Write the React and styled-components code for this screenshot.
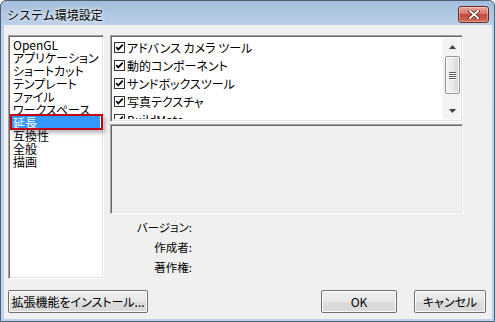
import React from 'react';
import styled, { createGlobalStyle } from 'styled-components';

const Global = createGlobalStyle`
  html, body { margin: 0; padding: 0; background: #ffffff; }
  body {
    width: 495px; height: 322px; overflow: hidden;
    font-family: "Noto Sans CJK JP", "Noto Sans", sans-serif;
    font-feature-settings: "palt";
    -webkit-font-smoothing: antialiased;
  }
`;

const Win = styled.div`
  width: 495px; height: 322px; box-sizing: border-box;
  display: flex; flex-direction: column;
  border: 1px solid #4d6078;
  border-radius: 6px 6px 0 0;
  background: linear-gradient(#a3bddb, #c0d4eb 30px, #bcd2ea);
  padding: 0 2px 2px 3px;
`;

const TitleBar = styled.div`
  height: 24px; flex: none;
  display: flex; align-items: center; justify-content: space-between;
  padding: 0 3px 0 3px;
`;

const Title = styled.div`
  font-size: 12px; color: #000;
  font-feature-settings: normal;
  text-shadow: 0 0 6px rgba(255,255,255,0.9), 0 0 3px rgba(255,255,255,0.9);
  margin-top: 3px;
`;

const CloseBtn = styled.div`
  width: 31px; height: 17px; box-sizing: border-box;
  margin-top: 3px;
  border: 1px solid #6b2a27; border-radius: 3px;
  background: linear-gradient(#e9a89b, #d5766a 45%, #c24a3d 50%, #cf6c57);
  box-shadow: inset 0 0 0 1px rgba(255,255,255,0.35);
  display: flex; align-items: center; justify-content: center;
`;

const Client = styled.div`
  flex: 1; background: #f0f0f0;
  display: flex; flex-direction: column;
  padding: 10px 6px 6px 4px;
  font-size: 12px; color: #000;
`;

const Main = styled.div`
  display: flex; gap: 6px; align-items: flex-start;
`;

const sunken = `
  box-sizing: border-box;
  border: 1px solid; border-color: #a0a0a0 #ffffff #ffffff #a0a0a0;
  box-shadow: inset 1px 1px 0 #696969, inset -1px -1px 0 #e3e3e3;
`;

const ListBox = styled.div`
  ${sunken}
  width: 96px; height: 244px;
  background: #fff;
  padding: 2px 3px 2px 2px;
`;

const ListItem = styled.div`
  position: relative;
  height: 13px; line-height: 13px;
  padding-left: 2px;
  white-space: nowrap;
  background: ${p => (p.$sel ? '#3399ff' : 'transparent')};
  color: ${p => (p.$sel ? '#fff' : '#000')};
  ${p => p.$sel && `
    &::after {
      content: ""; position: absolute;
      left: -1px; right: -3px; top: -2px; bottom: -1px;
      border: 2px solid #c3001c;
      box-shadow: 2px 3px 4px rgba(0,0,0,0.28);
    }
  `}
`;

const RightCol = styled.div`
  width: 353px; display: flex; flex-direction: column;
`;

const CheckList = styled.div`
  ${sunken}
  height: 87px; background: #fff;
  display: flex; overflow: hidden;
  padding: 2px;
`;

const CheckItems = styled.div`
  flex: 1; overflow: hidden;
  padding-left: 1px;
`;

const CheckRow = styled.div`
  height: 18px; display: flex; align-items: center; gap: 2px;
  white-space: nowrap;
`;

const ScrollBar = styled.div`
  width: 17px; flex: none;
  background: #f3f3f3;
  border-left: 1px solid #efefef;
  display: flex; flex-direction: column; align-items: center;
  box-sizing: border-box;
`;

const Arrow = styled.div`
  height: 17px; width: 100%;
  display: flex; align-items: center; justify-content: center;
`;

const Thumb = styled.div`
  width: 15px; height: 38px; box-sizing: border-box;
  margin-top: 1px;
  border: 1px solid #979797; border-radius: 2px;
  background: linear-gradient(90deg, #f3f3f3, #e8e8e8 50%, #d6d6d6);
  box-shadow: inset 0 0 0 1px rgba(255,255,255,0.8);
  display: flex; flex-direction: column; align-items: center; justify-content: center; gap: 1px;
`;

const Grip = styled.div`
  width: 7px; height: 1px; background: #5e5e5e;
  box-shadow: 0 1px 0 #fff;
`;

const Track = styled.div`flex: 1;`;

const DescBox = styled.div`
  ${sunken}
  height: 90px; margin-top: 2px;
  background: #f0f0f0;
`;

const Info = styled.div`
  margin-top: 3px;
  display: grid; grid-template-columns: 82px 1fr;
  grid-auto-rows: 20px; align-items: center;
  font-size: 11.5px;
`;

const Label = styled.div`text-align: right;`;

const Buttons = styled.div`
  margin-top: 11px;
  display: flex; align-items: center;
`;

const Btn = styled.button`
  width: ${p => p.$w}px; height: 23px;
  margin-left: ${p => p.$ml || 0}px;
  box-sizing: border-box;
  border: 1px solid #707070; border-radius: 2px;
  background: linear-gradient(#efefef, #e6e6e6 50%, #dcdcdc 51%, #d9d9d9);
  box-shadow: inset 0 0 0 1px #fbfbfb;
  font-family: inherit; font-size: 12px; color: #000;
  font-feature-settings: "palt";
  padding: 0; line-height: 21px;
`;

const Spacer = styled.div`flex: 1;`;

const Check = () => (
  <svg width="11" height="11" viewBox="0 0 11 11">
    <rect x="0.5" y="0.5" width="10" height="10" fill="#fff" stroke="#333" />
    <path d="M2.2 5.2 L4.3 7.4 L8.8 2.6" fill="none" stroke="#000" strokeWidth="1.7" />
  </svg>
);

const X = () => (
  <svg width="12" height="9" viewBox="0 0 12 9">
    <path d="M2 1 L10 8 M10 1 L2 8" stroke="#4a1a16" strokeWidth="3.4" strokeLinecap="square" />
    <path d="M2 1 L10 8 M10 1 L2 8" stroke="#fff" strokeWidth="2" strokeLinecap="square" />
  </svg>
);

const items = ['OpenGL', 'アプリケーション', 'ショートカット', 'テンプレート', 'ファイル', 'ワークスペース', '延長', '互換性', '全般', '描画'];
const checks = ['アドバンス カメラ ツール', '動的コンポーネント', 'サンドボックスツール', '写真テクスチャ', 'BuildMate'];

export default function App() {
  return (
    <>
      <Global />
      <Win>
        <TitleBar>
          <Title>システム環境設定</Title>
          <CloseBtn><X /></CloseBtn>
        </TitleBar>
        <Client>
          <Main>
            <ListBox>
              {items.map(t => (
                <ListItem key={t} $sel={t === '延長'}>{t}</ListItem>
              ))}
            </ListBox>
            <RightCol>
              <CheckList>
                <CheckItems>
                  {checks.map(t => (
                    <CheckRow key={t}><Check />{t}</CheckRow>
                  ))}
                </CheckItems>
                <ScrollBar>
                  <Arrow>
                    <svg width="7" height="4" viewBox="0 0 7 4"><path d="M0 4 L3.5 0 L7 4 Z" fill="#404040" /></svg>
                  </Arrow>
                  <Thumb><Grip /><Grip /><Grip /><Grip /></Thumb>
                  <Track />
                  <Arrow>
                    <svg width="7" height="4" viewBox="0 0 7 4"><path d="M0 0 L7 0 L3.5 4 Z" fill="#404040" /></svg>
                  </Arrow>
                </ScrollBar>
              </CheckList>
              <DescBox />
              <Info>
                <Label>バージョン:</Label><div />
                <Label>作成者:</Label><div />
                <Label>著作権:</Label><div />
              </Info>
            </RightCol>
          </Main>
          <Buttons>
            <Btn $w={140}>拡張機能をインストール...</Btn>
            <Spacer />
            <Btn $w={76}>OK</Btn>
            <Btn $w={72} $ml={17}>キャンセル</Btn>
          </Buttons>
        </Client>
      </Win>
    </>
  );
}
